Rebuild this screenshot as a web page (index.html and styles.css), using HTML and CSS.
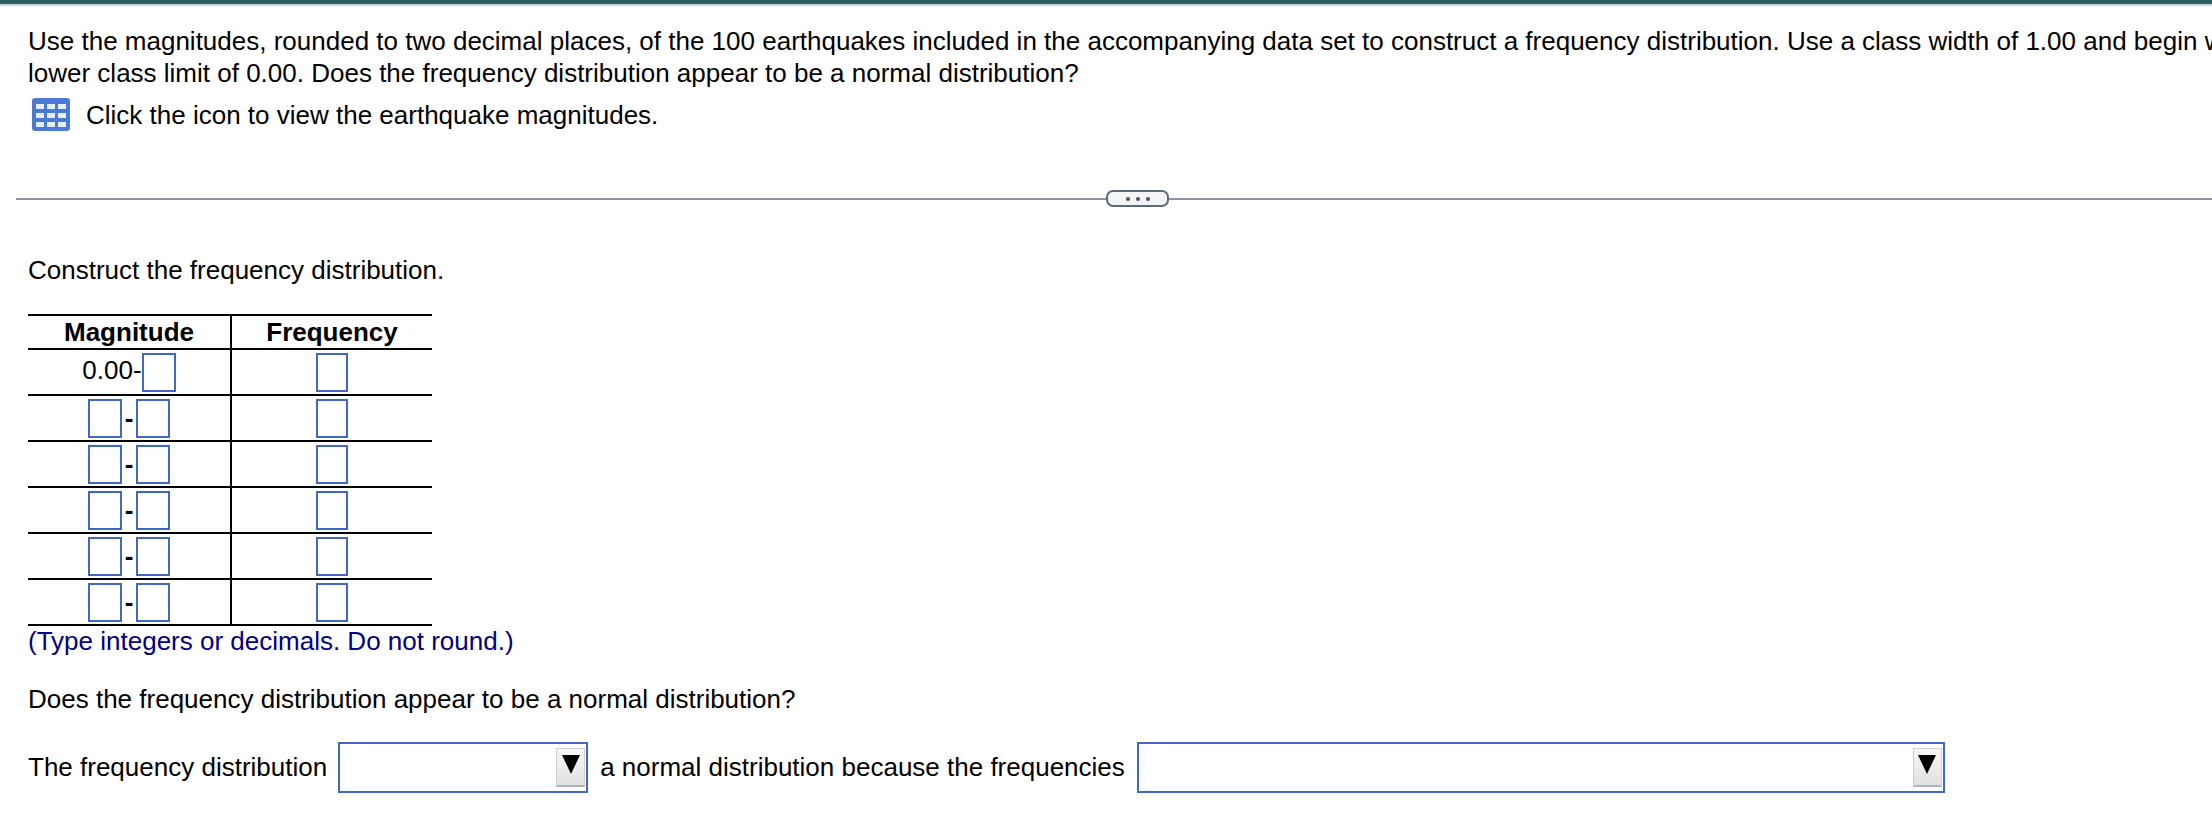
FILE: index.html
```html
<!DOCTYPE html>
<html lang="en">
<head>
    <meta charset="UTF-8">
    <title>Frequency Distribution</title>
    <link rel="stylesheet" href="styles.css">
</head>
<body>
    <div class="top-bar"></div>

    <div class="question">
        <p class="intro">Use the magnitudes, rounded to two decimal places, of the 100 earthquakes included in the accompanying data set to construct a frequency distribution. Use a class width of 1.00 and begin with a<br>lower class limit of 0.00. Does the frequency distribution appear to be a normal distribution?</p>
        <div class="data-link">
            <svg class="data-icon" viewBox="0 0 38 33" aria-hidden="true">
                <rect width="38" height="33" rx="3" fill="#4a7bd4"/>
                <g fill="#e6eefb">
                    <rect x="4" y="6" width="8" height="5"/>
                    <rect x="15" y="6" width="8" height="5"/>
                    <rect x="26" y="6" width="8" height="5"/>
                    <rect x="4" y="15" width="8" height="5"/>
                    <rect x="15" y="15" width="8" height="5"/>
                    <rect x="26" y="15" width="8" height="5"/>
                    <rect x="4" y="24" width="8" height="5"/>
                    <rect x="15" y="24" width="8" height="5"/>
                    <rect x="26" y="24" width="8" height="5"/>
                </g>
            </svg>
            <span>Click the icon to view the earthquake magnitudes.</span>
        </div>
    </div>

    <div class="divider">
        <div class="divider-line short"></div>
        <div class="more-pill"><i></i><i></i><i></i></div>
        <div class="divider-line"></div>
    </div>

    <div class="answer">
        <p class="construct">Construct the frequency distribution.</p>

        <table class="freq-table">
            <thead>
                <tr>
                    <th class="col-mag">Magnitude</th>
                    <th class="col-freq">Frequency</th>
                </tr>
            </thead>
            <tbody>
                <tr>
                    <td class="col-mag first-class">0.00-<input class="box" type="text"></td>
                    <td class="col-freq"><input class="box narrow" type="text"></td>
                </tr>
                <tr>
                    <td class="col-mag"><div class="range"><input class="box" type="text"><b>-</b><input class="box" type="text"></div></td>
                    <td class="col-freq"><input class="box narrow" type="text"></td>
                </tr>
                <tr>
                    <td class="col-mag"><div class="range"><input class="box" type="text"><b>-</b><input class="box" type="text"></div></td>
                    <td class="col-freq"><input class="box narrow" type="text"></td>
                </tr>
                <tr>
                    <td class="col-mag"><div class="range"><input class="box" type="text"><b>-</b><input class="box" type="text"></div></td>
                    <td class="col-freq"><input class="box narrow" type="text"></td>
                </tr>
                <tr>
                    <td class="col-mag"><div class="range"><input class="box" type="text"><b>-</b><input class="box" type="text"></div></td>
                    <td class="col-freq"><input class="box narrow" type="text"></td>
                </tr>
                <tr>
                    <td class="col-mag"><div class="range"><input class="box" type="text"><b>-</b><input class="box" type="text"></div></td>
                    <td class="col-freq"><input class="box narrow" type="text"></td>
                </tr>
            </tbody>
        </table>

        <p class="hint">(Type integers or decimals. Do not round.)</p>
        <p class="normal-question">Does the frequency distribution appear to be a normal distribution?</p>

        <div class="sentence">
            <span>The frequency distribution</span>
            <div class="dropdown small"><span class="arrow-btn"><span class="arrow"></span></span></div>
            <span>a normal distribution because the frequencies</span>
            <div class="dropdown large"><span class="arrow-btn"><span class="arrow"></span></span></div>
        </div>
    </div>
</body>
</html>
```

FILE: styles.css
```css
html, body {
    height: 100%;
}

body {
    margin: 0;
    background: #ffffff;
    color: #000000;
    font-family: 'Liberation Sans', Arial, sans-serif;
    font-size: 26px;
    line-height: 32px;
    overflow: hidden;
}

p {
    margin: 0;
}

.top-bar {
    height: 4px;
    background: #2b5f5c;
    border-bottom: 2px solid #cfcfe0;
}

.question {
    padding: 19px 0 0 28px;
    height: 174px;
    box-sizing: border-box;
    overflow: hidden;
}

.intro {
    white-space: nowrap;
}

.data-link {
    display: flex;
    align-items: center;
    margin-top: 9px;
    padding-left: 4px;
    gap: 16px;
}

.data-icon {
    width: 38px;
    height: 33px;
    flex: none;
    filter: blur(0.5px);
}

.divider {
    display: flex;
    align-items: center;
    padding-left: 16px;
    height: 17px;
    margin-top: 10px;
}

.divider-line {
    flex: 1;
    height: 2px;
    background: #8a94a3;
}

.divider-line.short {
    flex: none;
    width: 1090px;
}

.more-pill {
    display: flex;
    justify-content: center;
    align-items: center;
    gap: 6px;
    width: 63px;
    height: 17px;
    box-sizing: border-box;
    background: #f3f4f6;
    border: 2px solid #5c6b7b;
    border-radius: 7px;
}

.more-pill i {
    width: 4px;
    height: 4px;
    border-radius: 50%;
    background: #4a4f57;
}

.answer {
    padding: 47px 0 0 28px;
}

.freq-table {
    margin-top: 28px;
    border-collapse: collapse;
    table-layout: fixed;
    width: 404px;
}

.freq-table th,
.freq-table td {
    padding: 0;
    border-top: 2px solid #000000;
    border-bottom: 2px solid #000000;
    text-align: center;
}

.freq-table th {
    height: 32px;
    font-weight: bold;
    line-height: 30px;
}

.freq-table td {
    height: 44px;
    line-height: 0;
}

.col-mag {
    width: 202px;
    border-right: 2px solid #000000;
}

.first-class {
    line-height: 32px !important;
}

.range {
    display: flex;
    justify-content: center;
    align-items: center;
    line-height: 32px;
    gap: 3px;
}

.box {
    display: inline-block;
    vertical-align: middle;
    width: 34px;
    height: 39px;
    box-sizing: border-box;
    margin: 0;
    padding: 0;
    background: #ffffff;
    border: 2px solid #4169c4;
    border-radius: 0;
}

.box.narrow {
    width: 32px;
}

.hint {
    margin-top: -1px;
    color: #000080;
}

.normal-question {
    margin-top: 26px;
}

.sentence {
    display: flex;
    align-items: center;
    margin-top: 26px;
}

.dropdown {
    display: flex;
    justify-content: flex-end;
    height: 51px;
    box-sizing: border-box;
    margin-top: 1px;
    padding: 4px 1px 0 0;
    background: #ffffff;
    border: 2px solid #4169c4;
}

.dropdown.small {
    width: 250px;
    margin-left: 11px;
    margin-right: 12px;
}

.dropdown.large {
    width: 808px;
    margin-left: 12px;
}

.arrow-btn {
    display: flex;
    justify-content: center;
    width: 29px;
    height: 39px;
    box-sizing: border-box;
    padding-top: 6px;
    background: linear-gradient(#f6f6f6, #e2e2e2);
    border: 1px solid #d0d0d0;
    border-bottom: 2px solid #b4b4b4;
}

.arrow {
    width: 0;
    height: 0;
    border-left: 9px solid transparent;
    border-right: 9px solid transparent;
    border-top: 19px solid #000000;
}
```
